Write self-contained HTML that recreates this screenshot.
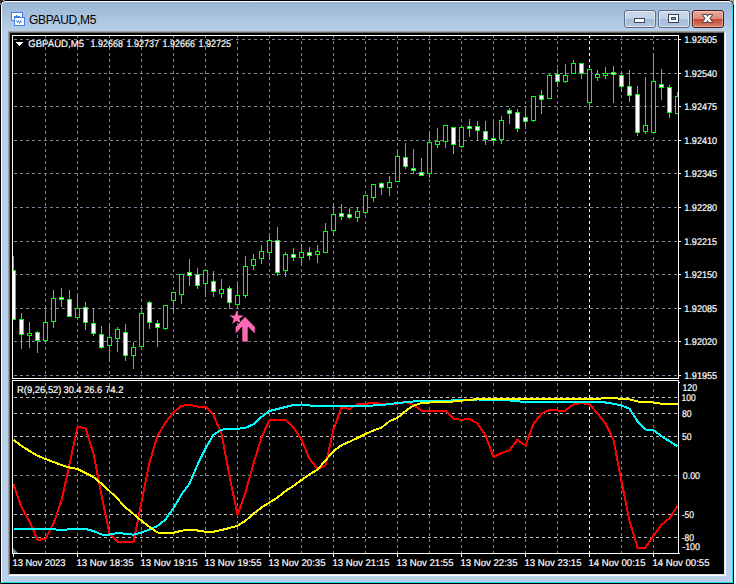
<!DOCTYPE html>
<html><head><meta charset="utf-8"><title>GBPAUD,M5</title>
<style>
html,body{margin:0;padding:0;background:#fff;}
body{width:736px;height:584px;position:relative;overflow:hidden;font-family:"Liberation Sans",sans-serif;}
#win{position:absolute;left:0;top:0;width:734px;height:584px;box-sizing:border-box;border:1px solid #000;border-radius:6px 6px 0 0;background:#b9d1ea;overflow:hidden;}
#hl{position:absolute;left:0;top:0;width:730px;height:580px;border-left:1px solid #fff;border-top:1px solid #fff;border-right:1px solid #28d2f5;border-bottom:1px solid #28d2f5;border-radius:5px 5px 0 0;box-sizing:content-box;}
#title{position:absolute;left:1px;top:1px;width:730px;height:30px;background:linear-gradient(#9ab5d3,#b9d1ea);}
#ttext{position:absolute;left:28px;top:12px;font-size:12px;line-height:14px;color:#000;letter-spacing:-0.3px;white-space:nowrap;}
#edge{position:absolute;left:7px;top:30px;width:716px;height:543px;border-left:1px solid #a0a0a0;border-top:1px solid #a0a0a0;border-right:1px solid #fff;border-bottom:1px solid #fff;}
#edge2{position:absolute;left:8px;top:31px;width:716px;height:543px;border-left:1px solid #696969;border-top:1px solid #696969;border-right:1px solid #e3e3e3;border-bottom:1px solid #e3e3e3;box-sizing:border-box;}
.btn{position:absolute;top:9px;width:32px;height:18px;box-sizing:border-box;border:1px solid #5b6b86;border-radius:3px;background:linear-gradient(#c9d9ec 0,#c1d3e8 49%,#a4bbd7 50%,#b3c8e1 100%);box-shadow:inset 0 0 0 1px rgba(255,255,255,.55);}
#bclose{border-color:#4a1a1a;background:linear-gradient(#e9a99b 0,#dd8a78 49%,#c4452a 50%,#d9836a 100%);box-shadow:inset 0 0 0 1px rgba(255,255,255,.35);}
</style></head><body>
<div style="position:absolute;left:0;top:0;width:3px;height:3px;background:#333"></div>
<div style="position:absolute;left:731px;top:0;width:3px;height:3px;background:#999"></div>
<div id="win">
<div id="title"></div>
<div id="hl"></div>
<svg id="icon" width="16" height="16" viewBox="0 0 16 16" style="position:absolute;left:10px;top:10px" shape-rendering="crispEdges">
<rect x="0.5" y="1.5" width="11" height="8" fill="#fff" stroke="#3f7fe8"/>
<path d="M2.5 5.5h2l1-1 1 2 1-1h1" fill="none" stroke="#3f7fe8"/>
<rect x="3.5" y="6.5" width="10" height="8" fill="#fff" stroke="#3f7fe8"/>
<path d="M5.5 9.5l1 2 1-2 1 3 1-3 1 2" fill="none" stroke="#3f7fe8" shape-rendering="auto"/>
</svg>
<div id="ttext">GBPAUD,M5</div>
<div class="btn" style="left:623px"><svg width="32" height="18" style="position:absolute;left:-1px;top:-1px" shape-rendering="crispEdges"><rect x="10.5" y="8.5" width="10" height="4" rx="1" fill="#fff" stroke="#3c4558"/></svg></div>
<div class="btn" style="left:657px"><svg width="32" height="18" style="position:absolute;left:-1px;top:-1px" shape-rendering="crispEdges"><rect x="10.5" y="4.5" width="10" height="8" rx="1" fill="#fff" stroke="#3c4558"/><rect x="13.5" y="7.5" width="4" height="2" fill="#7f9fcf" stroke="#3c4558"/></svg></div>
<div class="btn" id="bclose" style="left:691px"><svg width="32" height="18" style="position:absolute;left:-1px;top:-1px"><polygon points="11,5 14.2,5 15.5,6.9 16.8,5 20,5 17.3,8.5 20,12 16.8,12 15.5,10.1 14.2,12 11,12 13.7,8.5" fill="#fff" stroke="#4b4258" stroke-width="1.9" stroke-linejoin="round" paint-order="stroke"/></svg></div>
<div id="edge"></div><div id="edge2"></div>
</div>
<svg width="714" height="541" viewBox="10 33 714 541" style="position:absolute;left:10px;top:33px" font-family="'Liberation Sans', sans-serif" font-size="9.8" fill="#fff" text-rendering="geometricPrecision">
<rect x="10" y="33" width="714" height="541" fill="#000"/>
<g shape-rendering="crispEdges" fill="none">
<line x1="13" x2="678" y1="39.5" y2="39.5" stroke="#778899" stroke-dasharray="3 3" stroke-dashoffset="5"/>
<line x1="679" x2="681" y1="39.5" y2="39.5" stroke="#fff"/>
<line x1="13" x2="678" y1="73.5" y2="73.5" stroke="#778899" stroke-dasharray="3 3" stroke-dashoffset="5"/>
<line x1="679" x2="681" y1="73.5" y2="73.5" stroke="#fff"/>
<line x1="13" x2="678" y1="106.5" y2="106.5" stroke="#778899" stroke-dasharray="3 3" stroke-dashoffset="5"/>
<line x1="679" x2="681" y1="106.5" y2="106.5" stroke="#fff"/>
<line x1="13" x2="678" y1="140.5" y2="140.5" stroke="#778899" stroke-dasharray="3 3" stroke-dashoffset="5"/>
<line x1="679" x2="681" y1="140.5" y2="140.5" stroke="#fff"/>
<line x1="13" x2="678" y1="173.5" y2="173.5" stroke="#778899" stroke-dasharray="3 3" stroke-dashoffset="5"/>
<line x1="679" x2="681" y1="173.5" y2="173.5" stroke="#fff"/>
<line x1="13" x2="678" y1="207.5" y2="207.5" stroke="#778899" stroke-dasharray="3 3" stroke-dashoffset="5"/>
<line x1="679" x2="681" y1="207.5" y2="207.5" stroke="#fff"/>
<line x1="13" x2="678" y1="241.5" y2="241.5" stroke="#778899" stroke-dasharray="3 3" stroke-dashoffset="5"/>
<line x1="679" x2="681" y1="241.5" y2="241.5" stroke="#fff"/>
<line x1="13" x2="678" y1="274.5" y2="274.5" stroke="#778899" stroke-dasharray="3 3" stroke-dashoffset="5"/>
<line x1="679" x2="681" y1="274.5" y2="274.5" stroke="#fff"/>
<line x1="13" x2="678" y1="308.5" y2="308.5" stroke="#778899" stroke-dasharray="3 3" stroke-dashoffset="5"/>
<line x1="679" x2="681" y1="308.5" y2="308.5" stroke="#fff"/>
<line x1="13" x2="678" y1="341.5" y2="341.5" stroke="#778899" stroke-dasharray="3 3" stroke-dashoffset="5"/>
<line x1="679" x2="681" y1="341.5" y2="341.5" stroke="#fff"/>
<line x1="13" x2="678" y1="375.5" y2="375.5" stroke="#778899" stroke-dasharray="3 3" stroke-dashoffset="5"/>
<line x1="679" x2="681" y1="375.5" y2="375.5" stroke="#fff"/>
<line x1="45.5" x2="45.5" y1="36" y2="378" stroke="#778899" stroke-dasharray="3 3" stroke-dashoffset="1"/>
<line x1="45.5" x2="45.5" y1="381" y2="553" stroke="#778899" stroke-dasharray="3 3" stroke-dashoffset="4"/>
<line x1="77.5" x2="77.5" y1="36" y2="378" stroke="#778899" stroke-dasharray="3 3" stroke-dashoffset="1"/>
<line x1="77.5" x2="77.5" y1="381" y2="553" stroke="#778899" stroke-dasharray="3 3" stroke-dashoffset="4"/>
<line x1="109.5" x2="109.5" y1="36" y2="378" stroke="#778899" stroke-dasharray="3 3" stroke-dashoffset="1"/>
<line x1="109.5" x2="109.5" y1="381" y2="553" stroke="#778899" stroke-dasharray="3 3" stroke-dashoffset="4"/>
<line x1="141.5" x2="141.5" y1="36" y2="378" stroke="#778899" stroke-dasharray="3 3" stroke-dashoffset="1"/>
<line x1="141.5" x2="141.5" y1="381" y2="553" stroke="#778899" stroke-dasharray="3 3" stroke-dashoffset="4"/>
<line x1="173.5" x2="173.5" y1="36" y2="378" stroke="#778899" stroke-dasharray="3 3" stroke-dashoffset="1"/>
<line x1="173.5" x2="173.5" y1="381" y2="553" stroke="#778899" stroke-dasharray="3 3" stroke-dashoffset="4"/>
<line x1="205.5" x2="205.5" y1="36" y2="378" stroke="#778899" stroke-dasharray="3 3" stroke-dashoffset="1"/>
<line x1="205.5" x2="205.5" y1="381" y2="553" stroke="#778899" stroke-dasharray="3 3" stroke-dashoffset="4"/>
<line x1="237.5" x2="237.5" y1="36" y2="378" stroke="#778899" stroke-dasharray="3 3" stroke-dashoffset="1"/>
<line x1="237.5" x2="237.5" y1="381" y2="553" stroke="#778899" stroke-dasharray="3 3" stroke-dashoffset="4"/>
<line x1="269.5" x2="269.5" y1="36" y2="378" stroke="#778899" stroke-dasharray="3 3" stroke-dashoffset="1"/>
<line x1="269.5" x2="269.5" y1="381" y2="553" stroke="#778899" stroke-dasharray="3 3" stroke-dashoffset="4"/>
<line x1="301.5" x2="301.5" y1="36" y2="378" stroke="#778899" stroke-dasharray="3 3" stroke-dashoffset="1"/>
<line x1="301.5" x2="301.5" y1="381" y2="553" stroke="#778899" stroke-dasharray="3 3" stroke-dashoffset="4"/>
<line x1="333.5" x2="333.5" y1="36" y2="378" stroke="#778899" stroke-dasharray="3 3" stroke-dashoffset="1"/>
<line x1="333.5" x2="333.5" y1="381" y2="553" stroke="#778899" stroke-dasharray="3 3" stroke-dashoffset="4"/>
<line x1="365.5" x2="365.5" y1="36" y2="378" stroke="#778899" stroke-dasharray="3 3" stroke-dashoffset="1"/>
<line x1="365.5" x2="365.5" y1="381" y2="553" stroke="#778899" stroke-dasharray="3 3" stroke-dashoffset="4"/>
<line x1="397.5" x2="397.5" y1="36" y2="378" stroke="#778899" stroke-dasharray="3 3" stroke-dashoffset="1"/>
<line x1="397.5" x2="397.5" y1="381" y2="553" stroke="#778899" stroke-dasharray="3 3" stroke-dashoffset="4"/>
<line x1="429.5" x2="429.5" y1="36" y2="378" stroke="#778899" stroke-dasharray="3 3" stroke-dashoffset="1"/>
<line x1="429.5" x2="429.5" y1="381" y2="553" stroke="#778899" stroke-dasharray="3 3" stroke-dashoffset="4"/>
<line x1="461.5" x2="461.5" y1="36" y2="378" stroke="#778899" stroke-dasharray="3 3" stroke-dashoffset="1"/>
<line x1="461.5" x2="461.5" y1="381" y2="553" stroke="#778899" stroke-dasharray="3 3" stroke-dashoffset="4"/>
<line x1="493.5" x2="493.5" y1="36" y2="378" stroke="#778899" stroke-dasharray="3 3" stroke-dashoffset="1"/>
<line x1="493.5" x2="493.5" y1="381" y2="553" stroke="#778899" stroke-dasharray="3 3" stroke-dashoffset="4"/>
<line x1="525.5" x2="525.5" y1="36" y2="378" stroke="#778899" stroke-dasharray="3 3" stroke-dashoffset="1"/>
<line x1="525.5" x2="525.5" y1="381" y2="553" stroke="#778899" stroke-dasharray="3 3" stroke-dashoffset="4"/>
<line x1="557.5" x2="557.5" y1="36" y2="378" stroke="#778899" stroke-dasharray="3 3" stroke-dashoffset="1"/>
<line x1="557.5" x2="557.5" y1="381" y2="553" stroke="#778899" stroke-dasharray="3 3" stroke-dashoffset="4"/>
<line x1="589.5" x2="589.5" y1="36" y2="378" stroke="#fff" stroke-dasharray="3 3" stroke-dashoffset="1"/>
<line x1="589.5" x2="589.5" y1="381" y2="553" stroke="#fff" stroke-dasharray="3 3" stroke-dashoffset="4"/>
<line x1="621.5" x2="621.5" y1="36" y2="378" stroke="#778899" stroke-dasharray="3 3" stroke-dashoffset="1"/>
<line x1="621.5" x2="621.5" y1="381" y2="553" stroke="#778899" stroke-dasharray="3 3" stroke-dashoffset="4"/>
<line x1="653.5" x2="653.5" y1="36" y2="378" stroke="#778899" stroke-dasharray="3 3" stroke-dashoffset="1"/>
<line x1="653.5" x2="653.5" y1="381" y2="553" stroke="#778899" stroke-dasharray="3 3" stroke-dashoffset="4"/>
<line x1="13" x2="678" y1="397.5" y2="397.5" stroke="#c0c0c0" stroke-dasharray="3 3" stroke-dashoffset="5"/>
<line x1="13" x2="678" y1="413.5" y2="413.5" stroke="#c0c0c0" stroke-dasharray="3 3" stroke-dashoffset="5"/>
<line x1="13" x2="678" y1="436.5" y2="436.5" stroke="#c0c0c0" stroke-dasharray="3 3" stroke-dashoffset="5"/>
<line x1="13" x2="678" y1="475.5" y2="475.5" stroke="#778899" stroke-dasharray="3 3" stroke-dashoffset="5"/>
<line x1="13" x2="678" y1="514.5" y2="514.5" stroke="#c0c0c0" stroke-dasharray="3 3" stroke-dashoffset="5"/>
<line x1="13" x2="678" y1="537.5" y2="537.5" stroke="#c0c0c0" stroke-dasharray="3 3" stroke-dashoffset="5"/>
<line x1="679" x2="680" y1="382.5" y2="382.5" stroke="#fff"/>
<line x1="679" x2="680" y1="553.5" y2="553.5" stroke="#fff"/>
</g>
<clipPath id="cm"><rect x="13" y="36" width="665" height="342"/></clipPath>
<g shape-rendering="crispEdges" clip-path="url(#cm)">
<rect x="13" y="256" width="1" height="64" fill="#00ff00"/>
<rect x="11" y="270" width="5" height="50" fill="#00ff00"/>
<rect x="12" y="271" width="3" height="48" fill="#fff"/>
<rect x="21" y="313" width="1" height="36" fill="#00ff00"/>
<rect x="19" y="319" width="5" height="16" fill="#00ff00"/>
<rect x="20" y="320" width="3" height="14" fill="#fff"/>
<rect x="29" y="322" width="1" height="26" fill="#00ff00"/>
<rect x="27" y="333" width="5" height="3" fill="#00ff00"/>
<rect x="28" y="334" width="3" height="1" fill="#000"/>
<rect x="37" y="331" width="1" height="22" fill="#00ff00"/>
<rect x="35" y="332" width="5" height="9" fill="#00ff00"/>
<rect x="36" y="333" width="3" height="7" fill="#fff"/>
<rect x="45" y="307" width="1" height="34" fill="#00ff00"/>
<rect x="43" y="322" width="5" height="19" fill="#00ff00"/>
<rect x="44" y="323" width="3" height="17" fill="#000"/>
<rect x="53" y="290" width="1" height="38" fill="#00ff00"/>
<rect x="51" y="298" width="5" height="24" fill="#00ff00"/>
<rect x="52" y="299" width="3" height="22" fill="#000"/>
<rect x="61" y="288" width="1" height="19" fill="#00ff00"/>
<rect x="59" y="297" width="5" height="3" fill="#00ff00"/>
<rect x="60" y="298" width="3" height="1" fill="#fff"/>
<rect x="69" y="290" width="1" height="27" fill="#00ff00"/>
<rect x="67" y="299" width="5" height="18" fill="#00ff00"/>
<rect x="68" y="300" width="3" height="16" fill="#fff"/>
<rect x="77" y="295" width="1" height="23" fill="#00ff00"/>
<rect x="75" y="308" width="5" height="10" fill="#00ff00"/>
<rect x="76" y="309" width="3" height="8" fill="#000"/>
<rect x="85" y="302" width="1" height="28" fill="#00ff00"/>
<rect x="83" y="307" width="5" height="16" fill="#00ff00"/>
<rect x="84" y="308" width="3" height="14" fill="#fff"/>
<rect x="93" y="309" width="1" height="27" fill="#00ff00"/>
<rect x="91" y="323" width="5" height="11" fill="#00ff00"/>
<rect x="92" y="324" width="3" height="9" fill="#fff"/>
<rect x="101" y="326" width="1" height="23" fill="#00ff00"/>
<rect x="99" y="334" width="5" height="14" fill="#00ff00"/>
<rect x="100" y="335" width="3" height="12" fill="#fff"/>
<rect x="109" y="323" width="1" height="39" fill="#00ff00"/>
<rect x="107" y="337" width="5" height="9" fill="#00ff00"/>
<rect x="108" y="338" width="3" height="7" fill="#000"/>
<rect x="117" y="327" width="1" height="25" fill="#00ff00"/>
<rect x="115" y="329" width="5" height="10" fill="#00ff00"/>
<rect x="116" y="330" width="3" height="8" fill="#000"/>
<rect x="125" y="324" width="1" height="37" fill="#00ff00"/>
<rect x="123" y="332" width="5" height="24" fill="#00ff00"/>
<rect x="124" y="333" width="3" height="22" fill="#fff"/>
<rect x="133" y="342" width="1" height="27" fill="#00ff00"/>
<rect x="131" y="347" width="5" height="9" fill="#00ff00"/>
<rect x="132" y="348" width="3" height="7" fill="#000"/>
<rect x="141" y="308" width="1" height="39" fill="#00ff00"/>
<rect x="139" y="313" width="5" height="34" fill="#00ff00"/>
<rect x="140" y="314" width="3" height="32" fill="#000"/>
<rect x="149" y="301" width="1" height="28" fill="#00ff00"/>
<rect x="147" y="302" width="5" height="21" fill="#00ff00"/>
<rect x="148" y="303" width="3" height="19" fill="#fff"/>
<rect x="157" y="320" width="1" height="27" fill="#00ff00"/>
<rect x="155" y="323" width="5" height="5" fill="#00ff00"/>
<rect x="156" y="324" width="3" height="3" fill="#fff"/>
<rect x="165" y="305" width="1" height="25" fill="#00ff00"/>
<rect x="163" y="305" width="5" height="24" fill="#00ff00"/>
<rect x="164" y="306" width="3" height="22" fill="#000"/>
<rect x="173" y="292" width="1" height="19" fill="#00ff00"/>
<rect x="171" y="292" width="5" height="9" fill="#00ff00"/>
<rect x="172" y="293" width="3" height="7" fill="#000"/>
<rect x="181" y="274" width="1" height="30" fill="#00ff00"/>
<rect x="179" y="274" width="5" height="21" fill="#00ff00"/>
<rect x="180" y="275" width="3" height="19" fill="#000"/>
<rect x="189" y="259" width="1" height="27" fill="#00ff00"/>
<rect x="187" y="272" width="5" height="4" fill="#00ff00"/>
<rect x="188" y="273" width="3" height="2" fill="#fff"/>
<rect x="197" y="268" width="1" height="21" fill="#00ff00"/>
<rect x="195" y="274" width="5" height="12" fill="#00ff00"/>
<rect x="196" y="275" width="3" height="10" fill="#fff"/>
<rect x="205" y="270" width="1" height="27" fill="#00ff00"/>
<rect x="203" y="270" width="5" height="14" fill="#00ff00"/>
<rect x="204" y="271" width="3" height="12" fill="#000"/>
<rect x="213" y="271" width="1" height="26" fill="#00ff00"/>
<rect x="211" y="281" width="5" height="11" fill="#00ff00"/>
<rect x="212" y="282" width="3" height="9" fill="#fff"/>
<rect x="221" y="279" width="1" height="19" fill="#00ff00"/>
<rect x="219" y="289" width="5" height="5" fill="#00ff00"/>
<rect x="220" y="290" width="3" height="3" fill="#000"/>
<rect x="229" y="286" width="1" height="23" fill="#00ff00"/>
<rect x="227" y="288" width="5" height="15" fill="#00ff00"/>
<rect x="228" y="289" width="3" height="13" fill="#fff"/>
<rect x="237" y="283" width="1" height="22" fill="#00ff00"/>
<rect x="235" y="295" width="5" height="10" fill="#00ff00"/>
<rect x="236" y="296" width="3" height="8" fill="#000"/>
<rect x="245" y="256" width="1" height="42" fill="#00ff00"/>
<rect x="243" y="266" width="5" height="30" fill="#00ff00"/>
<rect x="244" y="267" width="3" height="28" fill="#000"/>
<rect x="253" y="254" width="1" height="16" fill="#00ff00"/>
<rect x="251" y="259" width="5" height="7" fill="#00ff00"/>
<rect x="252" y="260" width="3" height="5" fill="#000"/>
<rect x="261" y="245" width="1" height="19" fill="#00ff00"/>
<rect x="259" y="251" width="5" height="8" fill="#00ff00"/>
<rect x="260" y="252" width="3" height="6" fill="#000"/>
<rect x="269" y="236" width="1" height="23" fill="#00ff00"/>
<rect x="267" y="240" width="5" height="13" fill="#00ff00"/>
<rect x="268" y="241" width="3" height="11" fill="#000"/>
<rect x="277" y="227" width="1" height="49" fill="#00ff00"/>
<rect x="275" y="240" width="5" height="33" fill="#00ff00"/>
<rect x="276" y="241" width="3" height="31" fill="#fff"/>
<rect x="285" y="252" width="1" height="25" fill="#00ff00"/>
<rect x="283" y="254" width="5" height="17" fill="#00ff00"/>
<rect x="284" y="255" width="3" height="15" fill="#000"/>
<rect x="293" y="248" width="1" height="13" fill="#00ff00"/>
<rect x="291" y="254" width="5" height="4" fill="#00ff00"/>
<rect x="292" y="255" width="3" height="2" fill="#fff"/>
<rect x="301" y="244" width="1" height="22" fill="#00ff00"/>
<rect x="299" y="252" width="5" height="6" fill="#00ff00"/>
<rect x="300" y="253" width="3" height="4" fill="#000"/>
<rect x="309" y="247" width="1" height="13" fill="#00ff00"/>
<rect x="307" y="252" width="5" height="4" fill="#00ff00"/>
<rect x="308" y="253" width="3" height="2" fill="#fff"/>
<rect x="317" y="245" width="1" height="18" fill="#00ff00"/>
<rect x="315" y="251" width="5" height="4" fill="#00ff00"/>
<rect x="316" y="252" width="3" height="2" fill="#000"/>
<rect x="325" y="223" width="1" height="30" fill="#00ff00"/>
<rect x="323" y="231" width="5" height="22" fill="#00ff00"/>
<rect x="324" y="232" width="3" height="20" fill="#000"/>
<rect x="333" y="204" width="1" height="32" fill="#00ff00"/>
<rect x="331" y="214" width="5" height="17" fill="#00ff00"/>
<rect x="332" y="215" width="3" height="15" fill="#000"/>
<rect x="341" y="204" width="1" height="16" fill="#00ff00"/>
<rect x="339" y="213" width="5" height="4" fill="#00ff00"/>
<rect x="340" y="214" width="3" height="2" fill="#fff"/>
<rect x="349" y="208" width="1" height="11" fill="#00ff00"/>
<rect x="347" y="214" width="5" height="4" fill="#00ff00"/>
<rect x="348" y="215" width="3" height="2" fill="#fff"/>
<rect x="357" y="208" width="1" height="14" fill="#00ff00"/>
<rect x="355" y="211" width="5" height="7" fill="#00ff00"/>
<rect x="356" y="212" width="3" height="5" fill="#000"/>
<rect x="365" y="195" width="1" height="19" fill="#00ff00"/>
<rect x="363" y="195" width="5" height="18" fill="#00ff00"/>
<rect x="364" y="196" width="3" height="16" fill="#000"/>
<rect x="373" y="184" width="1" height="18" fill="#00ff00"/>
<rect x="371" y="184" width="5" height="14" fill="#00ff00"/>
<rect x="372" y="185" width="3" height="12" fill="#000"/>
<rect x="381" y="182" width="1" height="13" fill="#00ff00"/>
<rect x="379" y="183" width="5" height="5" fill="#00ff00"/>
<rect x="380" y="184" width="3" height="3" fill="#fff"/>
<rect x="389" y="176" width="1" height="20" fill="#00ff00"/>
<rect x="387" y="182" width="5" height="6" fill="#00ff00"/>
<rect x="388" y="183" width="3" height="4" fill="#000"/>
<rect x="397" y="150" width="1" height="32" fill="#00ff00"/>
<rect x="395" y="156" width="5" height="26" fill="#00ff00"/>
<rect x="396" y="157" width="3" height="24" fill="#000"/>
<rect x="405" y="143" width="1" height="26" fill="#00ff00"/>
<rect x="403" y="157" width="5" height="10" fill="#00ff00"/>
<rect x="404" y="158" width="3" height="8" fill="#fff"/>
<rect x="413" y="149" width="1" height="25" fill="#00ff00"/>
<rect x="411" y="168" width="5" height="3" fill="#00ff00"/>
<rect x="412" y="169" width="3" height="1" fill="#fff"/>
<rect x="421" y="158" width="1" height="18" fill="#00ff00"/>
<rect x="419" y="172" width="5" height="4" fill="#00ff00"/>
<rect x="420" y="173" width="3" height="2" fill="#fff"/>
<rect x="429" y="131" width="1" height="47" fill="#00ff00"/>
<rect x="427" y="142" width="5" height="32" fill="#00ff00"/>
<rect x="428" y="143" width="3" height="30" fill="#000"/>
<rect x="437" y="128" width="1" height="20" fill="#00ff00"/>
<rect x="435" y="141" width="5" height="4" fill="#00ff00"/>
<rect x="436" y="142" width="3" height="2" fill="#000"/>
<rect x="445" y="125" width="1" height="23" fill="#00ff00"/>
<rect x="443" y="125" width="5" height="17" fill="#00ff00"/>
<rect x="444" y="126" width="3" height="15" fill="#000"/>
<rect x="453" y="127" width="1" height="27" fill="#00ff00"/>
<rect x="451" y="127" width="5" height="18" fill="#00ff00"/>
<rect x="452" y="128" width="3" height="16" fill="#fff"/>
<rect x="461" y="126" width="1" height="22" fill="#00ff00"/>
<rect x="459" y="127" width="5" height="20" fill="#00ff00"/>
<rect x="460" y="128" width="3" height="18" fill="#000"/>
<rect x="469" y="119" width="1" height="18" fill="#00ff00"/>
<rect x="467" y="126" width="5" height="3" fill="#00ff00"/>
<rect x="468" y="127" width="3" height="1" fill="#fff"/>
<rect x="477" y="121" width="1" height="20" fill="#00ff00"/>
<rect x="475" y="126" width="5" height="5" fill="#00ff00"/>
<rect x="476" y="127" width="3" height="3" fill="#fff"/>
<rect x="485" y="121" width="1" height="24" fill="#00ff00"/>
<rect x="483" y="131" width="5" height="9" fill="#00ff00"/>
<rect x="484" y="132" width="3" height="7" fill="#fff"/>
<rect x="493" y="119" width="1" height="25" fill="#00ff00"/>
<rect x="491" y="138" width="5" height="3" fill="#00ff00"/>
<rect x="492" y="139" width="3" height="1" fill="#fff"/>
<rect x="501" y="116" width="1" height="28" fill="#00ff00"/>
<rect x="499" y="120" width="5" height="20" fill="#00ff00"/>
<rect x="500" y="121" width="3" height="18" fill="#000"/>
<rect x="509" y="108" width="1" height="16" fill="#00ff00"/>
<rect x="507" y="110" width="5" height="4" fill="#00ff00"/>
<rect x="508" y="111" width="3" height="2" fill="#fff"/>
<rect x="517" y="109" width="1" height="23" fill="#00ff00"/>
<rect x="515" y="112" width="5" height="17" fill="#00ff00"/>
<rect x="516" y="113" width="3" height="15" fill="#fff"/>
<rect x="525" y="107" width="1" height="22" fill="#00ff00"/>
<rect x="523" y="117" width="5" height="5" fill="#00ff00"/>
<rect x="524" y="118" width="3" height="3" fill="#fff"/>
<rect x="533" y="96" width="1" height="26" fill="#00ff00"/>
<rect x="531" y="96" width="5" height="25" fill="#00ff00"/>
<rect x="532" y="97" width="3" height="23" fill="#000"/>
<rect x="541" y="90" width="1" height="24" fill="#00ff00"/>
<rect x="539" y="95" width="5" height="5" fill="#00ff00"/>
<rect x="540" y="96" width="3" height="3" fill="#fff"/>
<rect x="549" y="74" width="1" height="25" fill="#00ff00"/>
<rect x="547" y="75" width="5" height="24" fill="#00ff00"/>
<rect x="548" y="76" width="3" height="22" fill="#000"/>
<rect x="557" y="69" width="1" height="18" fill="#00ff00"/>
<rect x="555" y="74" width="5" height="8" fill="#00ff00"/>
<rect x="556" y="75" width="3" height="6" fill="#fff"/>
<rect x="565" y="64" width="1" height="19" fill="#00ff00"/>
<rect x="563" y="75" width="5" height="7" fill="#00ff00"/>
<rect x="564" y="76" width="3" height="5" fill="#000"/>
<rect x="573" y="60" width="1" height="14" fill="#00ff00"/>
<rect x="571" y="63" width="5" height="11" fill="#00ff00"/>
<rect x="572" y="64" width="3" height="9" fill="#000"/>
<rect x="581" y="63" width="1" height="16" fill="#00ff00"/>
<rect x="579" y="63" width="5" height="11" fill="#00ff00"/>
<rect x="580" y="64" width="3" height="9" fill="#fff"/>
<rect x="589" y="69" width="1" height="41" fill="#00ff00"/>
<rect x="587" y="69" width="5" height="34" fill="#00ff00"/>
<rect x="588" y="70" width="3" height="32" fill="#000"/>
<rect x="597" y="70" width="1" height="11" fill="#00ff00"/>
<rect x="595" y="74" width="5" height="4" fill="#00ff00"/>
<rect x="596" y="75" width="3" height="2" fill="#000"/>
<rect x="605" y="67" width="1" height="12" fill="#00ff00"/>
<rect x="603" y="73" width="5" height="3" fill="#00ff00"/>
<rect x="604" y="74" width="3" height="1" fill="#000"/>
<rect x="613" y="66" width="1" height="37" fill="#00ff00"/>
<rect x="611" y="72" width="5" height="3" fill="#00ff00"/>
<rect x="612" y="73" width="3" height="1" fill="#fff"/>
<rect x="621" y="73" width="1" height="19" fill="#00ff00"/>
<rect x="619" y="75" width="5" height="12" fill="#00ff00"/>
<rect x="620" y="76" width="3" height="10" fill="#fff"/>
<rect x="629" y="70" width="1" height="32" fill="#00ff00"/>
<rect x="627" y="86" width="5" height="10" fill="#00ff00"/>
<rect x="628" y="87" width="3" height="8" fill="#fff"/>
<rect x="637" y="86" width="1" height="50" fill="#00ff00"/>
<rect x="635" y="94" width="5" height="39" fill="#00ff00"/>
<rect x="636" y="95" width="3" height="37" fill="#fff"/>
<rect x="645" y="77" width="1" height="57" fill="#00ff00"/>
<rect x="643" y="125" width="5" height="7" fill="#00ff00"/>
<rect x="644" y="126" width="3" height="5" fill="#000"/>
<rect x="653" y="53" width="1" height="80" fill="#00ff00"/>
<rect x="651" y="81" width="5" height="52" fill="#00ff00"/>
<rect x="652" y="82" width="3" height="50" fill="#000"/>
<rect x="661" y="69" width="1" height="31" fill="#00ff00"/>
<rect x="659" y="84" width="5" height="4" fill="#00ff00"/>
<rect x="660" y="85" width="3" height="2" fill="#fff"/>
<rect x="669" y="85" width="1" height="33" fill="#00ff00"/>
<rect x="667" y="87" width="5" height="26" fill="#00ff00"/>
<rect x="668" y="88" width="3" height="24" fill="#fff"/>
<rect x="677" y="92" width="1" height="22" fill="#00ff00"/>
<rect x="675" y="96" width="5" height="18" fill="#00ff00"/>
<rect x="676" y="97" width="3" height="16" fill="#000"/>
</g>
<polygon points="236.60,310.30 238.30,315.55 243.83,315.55 239.36,318.80 241.07,324.05 236.60,320.80 232.13,324.05 233.84,318.80 229.37,315.55 234.90,315.55" fill="#ff69b4"/>
<polygon points="245,316.6 255.2,327 255.2,334 248,327 248,342 242,342 242,327 235.4,334 235.4,327" fill="#ff69b4" stroke="#000" stroke-width="0.6"/>
<clipPath id="ci"><rect x="13" y="381" width="665" height="172"/></clipPath>
<g clip-path="url(#ci)" fill="none" stroke-width="2" stroke-linejoin="round" shape-rendering="crispEdges">
<polyline points="13.5,484.5 21.5,507.2 29.5,521.3 37.5,540 45.5,538.7 53.5,523.5 61.5,500.5 69.5,464.5 77.5,427 85.5,428 93.5,453.75 101.5,495 109.5,533.75 117.5,541.75 125.5,541.75 133.5,541.5 141.5,502.5 149.5,462.5 157.5,436 165.5,422.4 173.5,412.6 181.5,405.8 189.5,404.8 197.5,406.6 205.5,406.6 213.5,415 221.5,433.75 229.5,476 237.5,515 245.5,492.5 253.5,463.5 261.5,437.5 269.5,420 277.5,419.5 285.5,420 293.5,427.5 301.5,439.5 309.5,458.75 317.5,468.75 325.5,465.3 333.5,429.5 341.5,407.4 349.5,409 357.5,404.5 365.5,403.8 373.5,402.6 381.5,404 389.5,403.5 397.5,403.5 405.5,401.8 413.5,405 421.5,410.6 429.5,410.6 437.5,410.75 445.5,410.75 453.5,418.5 461.5,419.9 469.5,418.8 477.5,423.5 485.5,435.5 493.5,457 501.5,453 509.5,450.4 517.5,439.8 525.5,445.7 533.5,423.75 541.5,413.75 549.5,410 557.5,410.5 565.5,410.5 573.5,404.25 581.5,403.25 589.5,404.25 597.5,413.5 605.5,423.5 613.5,439.8 621.5,481.5 629.5,520.8 637.5,547.6 645.5,547.6 653.5,535.8 661.5,524.7 669.5,518.4 677.5,505.8" stroke="#ff0000"/>
<polyline points="13.5,529.25 21.5,529.25 29.5,529.25 37.5,529.25 45.5,529.25 53.5,529.25 61.5,530 69.5,529.3 77.5,528.6 85.5,529 93.5,531 101.5,534.5 109.5,534.5 117.5,533 125.5,533.75 133.5,534.7 141.5,532.5 149.5,529.5 157.5,526 165.5,519.5 173.5,508 181.5,494.5 189.5,483.5 197.5,464.8 205.5,448.5 213.5,434.8 221.5,429.6 229.5,429.2 237.5,428.8 245.5,427.8 253.5,424.2 261.5,416.8 269.5,411 277.5,409 285.5,407 293.5,405 301.5,404.5 309.5,405.5 317.5,405.75 325.5,405.75 333.5,405.75 341.5,406 349.5,406 357.5,405.8 365.5,405.7 373.5,405.5 381.5,405.2 389.5,404 397.5,403.1 405.5,402.3 413.5,401.5 421.5,401.1 429.5,401.1 437.5,400.9 445.5,400.8 453.5,400.4 461.5,400 469.5,399.8 477.5,399.5 485.5,399.6 493.5,399.7 501.5,399.7 509.5,400.4 517.5,401.4 525.5,401.75 533.5,401.75 541.5,401.75 549.5,401.75 557.5,401.75 565.5,401.75 573.5,401.75 581.5,401.75 589.5,401.75 597.5,401.75 605.5,402.5 613.5,403.75 621.5,405.5 629.5,408.75 637.5,421.25 645.5,429.5 653.5,430 661.5,436.25 669.5,441.25 677.5,446.25" stroke="#00ffff"/>
<polyline points="13.5,440 21.5,445.75 29.5,451 37.5,455.75 45.5,459 53.5,462 61.5,465 69.5,467.5 77.5,469 85.5,473 93.5,477 101.5,483.75 109.5,491 117.5,498.75 125.5,507.5 133.5,514 141.5,520.75 149.5,527 157.5,532.5 165.5,532.75 173.5,532.75 181.5,530.75 189.5,529.75 197.5,530.5 205.5,531.75 213.5,531.75 221.5,530 229.5,528 237.5,525.75 245.5,520.75 253.5,513.75 261.5,507.5 269.5,502.5 277.5,497.5 285.5,491 293.5,485.75 301.5,480 309.5,474.5 317.5,469.5 325.5,460.5 333.5,451 341.5,445.3 349.5,441.7 357.5,438 365.5,434 373.5,430.5 381.5,427.6 389.5,421.2 397.5,417.8 405.5,411 413.5,405.6 421.5,402.9 429.5,402.5 437.5,401.9 445.5,401.8 453.5,401.5 461.5,400.6 469.5,400.2 477.5,398.8 485.5,399 493.5,399 501.5,399 509.5,399 517.5,399 525.5,399 533.5,399 541.5,399 549.5,399 557.5,399 565.5,399 573.5,399 581.5,399 589.5,399 597.5,399 605.5,398 613.5,398.2 621.5,398.8 629.5,399.3 637.5,401.5 645.5,402 653.5,402.5 661.5,403.75 669.5,403.75 677.5,403.75" stroke="#ffff00"/>
</g>
<g shape-rendering="crispEdges" fill="none" stroke="#fff">
<rect x="12.5" y="35.5" width="666" height="343"/>
<rect x="12.5" y="380.5" width="666" height="173"/>
<line x1="13.5" x2="13.5" y1="554" y2="557"/>
<line x1="77.5" x2="77.5" y1="554" y2="557"/>
<line x1="141.5" x2="141.5" y1="554" y2="557"/>
<line x1="205.5" x2="205.5" y1="554" y2="557"/>
<line x1="269.5" x2="269.5" y1="554" y2="557"/>
<line x1="333.5" x2="333.5" y1="554" y2="557"/>
<line x1="397.5" x2="397.5" y1="554" y2="557"/>
<line x1="461.5" x2="461.5" y1="554" y2="557"/>
<line x1="525.5" x2="525.5" y1="554" y2="557"/>
<line x1="589.5" x2="589.5" y1="554" y2="557"/>
<line x1="653.5" x2="653.5" y1="554" y2="557"/>
</g>
<polygon points="13,548 13,553 18,553" fill="#778899"/>
<polygon points="16,42 23,42 19.5,46" fill="#fff" shape-rendering="crispEdges"/>
<text x="684.2" y="43" textLength="33" lengthAdjust="spacingAndGlyphs" stroke="#fff" stroke-width="0.2">1.92605</text>
<text x="684.2" y="77" textLength="33" lengthAdjust="spacingAndGlyphs" stroke="#fff" stroke-width="0.2">1.92540</text>
<text x="684.2" y="110" textLength="33" lengthAdjust="spacingAndGlyphs" stroke="#fff" stroke-width="0.2">1.92475</text>
<text x="684.2" y="144" textLength="33" lengthAdjust="spacingAndGlyphs" stroke="#fff" stroke-width="0.2">1.92410</text>
<text x="684.2" y="177" textLength="33" lengthAdjust="spacingAndGlyphs" stroke="#fff" stroke-width="0.2">1.92345</text>
<text x="684.2" y="211" textLength="33" lengthAdjust="spacingAndGlyphs" stroke="#fff" stroke-width="0.2">1.92280</text>
<text x="684.2" y="245" textLength="33" lengthAdjust="spacingAndGlyphs" stroke="#fff" stroke-width="0.2">1.92215</text>
<text x="684.2" y="278" textLength="33" lengthAdjust="spacingAndGlyphs" stroke="#fff" stroke-width="0.2">1.92150</text>
<text x="684.2" y="312" textLength="33" lengthAdjust="spacingAndGlyphs" stroke="#fff" stroke-width="0.2">1.92085</text>
<text x="684.2" y="345" textLength="33" lengthAdjust="spacingAndGlyphs" stroke="#fff" stroke-width="0.2">1.92020</text>
<text x="684.2" y="379" textLength="33" lengthAdjust="spacingAndGlyphs" stroke="#fff" stroke-width="0.2">1.91955</text>
<text x="28.2" y="47" textLength="55.8" lengthAdjust="spacingAndGlyphs" stroke="#fff" stroke-width="0.2">GBPAUD,M5</text>
<text x="90.5" y="47" textLength="32.5" lengthAdjust="spacingAndGlyphs" stroke="#fff" stroke-width="0.2">1.92668</text>
<text x="126.5" y="47" textLength="32.5" lengthAdjust="spacingAndGlyphs" stroke="#fff" stroke-width="0.2">1.92737</text>
<text x="162.5" y="47" textLength="32.5" lengthAdjust="spacingAndGlyphs" stroke="#fff" stroke-width="0.2">1.92666</text>
<text x="198.5" y="47" textLength="32.5" lengthAdjust="spacingAndGlyphs" stroke="#fff" stroke-width="0.2">1.92725</text>
<text x="17" y="393" textLength="44.5" lengthAdjust="spacingAndGlyphs" stroke="#fff" stroke-width="0.2">R(9,26,52)</text>
<text x="63.5" y="393" textLength="18" lengthAdjust="spacingAndGlyphs" stroke="#fff" stroke-width="0.2">30.4</text>
<text x="84.2" y="393" textLength="18" lengthAdjust="spacingAndGlyphs" stroke="#fff" stroke-width="0.2">26.6</text>
<text x="105" y="393" textLength="18.5" lengthAdjust="spacingAndGlyphs" stroke="#fff" stroke-width="0.2">74.2</text>
<text x="682.4" y="391" textLength="14.7" lengthAdjust="spacingAndGlyphs" stroke="#fff" stroke-width="0.2">120</text>
<text x="681.5" y="401" textLength="14.2" lengthAdjust="spacingAndGlyphs" stroke="#fff" stroke-width="0.2">100</text>
<text x="681.9" y="417" textLength="9.6" lengthAdjust="spacingAndGlyphs" stroke="#fff" stroke-width="0.2">80</text>
<text x="681.9" y="440" textLength="9.6" lengthAdjust="spacingAndGlyphs" stroke="#fff" stroke-width="0.2">50</text>
<text x="682.8" y="479" textLength="17.2" lengthAdjust="spacingAndGlyphs" stroke="#fff" stroke-width="0.2">0.00</text>
<text x="681.7" y="518" textLength="12.2" lengthAdjust="spacingAndGlyphs" stroke="#fff" stroke-width="0.2">-50</text>
<text x="681.7" y="541" textLength="12.2" lengthAdjust="spacingAndGlyphs" stroke="#fff" stroke-width="0.2">-80</text>
<text x="682.2" y="550" textLength="17.8" lengthAdjust="spacingAndGlyphs" stroke="#fff" stroke-width="0.2">-100</text>
<text x="12.5" y="566" textLength="53" lengthAdjust="spacingAndGlyphs" stroke="#fff" stroke-width="0.2">13 Nov 2023</text>
<text x="76.5" y="566" textLength="57" lengthAdjust="spacingAndGlyphs" stroke="#fff" stroke-width="0.2">13 Nov 18:35</text>
<text x="140.5" y="566" textLength="57" lengthAdjust="spacingAndGlyphs" stroke="#fff" stroke-width="0.2">13 Nov 19:15</text>
<text x="204.5" y="566" textLength="57" lengthAdjust="spacingAndGlyphs" stroke="#fff" stroke-width="0.2">13 Nov 19:55</text>
<text x="268.5" y="566" textLength="57" lengthAdjust="spacingAndGlyphs" stroke="#fff" stroke-width="0.2">13 Nov 20:35</text>
<text x="332.5" y="566" textLength="57" lengthAdjust="spacingAndGlyphs" stroke="#fff" stroke-width="0.2">13 Nov 21:15</text>
<text x="396.5" y="566" textLength="57" lengthAdjust="spacingAndGlyphs" stroke="#fff" stroke-width="0.2">13 Nov 21:55</text>
<text x="460.5" y="566" textLength="57" lengthAdjust="spacingAndGlyphs" stroke="#fff" stroke-width="0.2">13 Nov 22:35</text>
<text x="524.5" y="566" textLength="57" lengthAdjust="spacingAndGlyphs" stroke="#fff" stroke-width="0.2">13 Nov 23:15</text>
<text x="588.5" y="566" textLength="57" lengthAdjust="spacingAndGlyphs" stroke="#fff" stroke-width="0.2">14 Nov 00:15</text>
<text x="652.5" y="566" textLength="57" lengthAdjust="spacingAndGlyphs" stroke="#fff" stroke-width="0.2">14 Nov 00:55</text>
</svg>
</body></html>
